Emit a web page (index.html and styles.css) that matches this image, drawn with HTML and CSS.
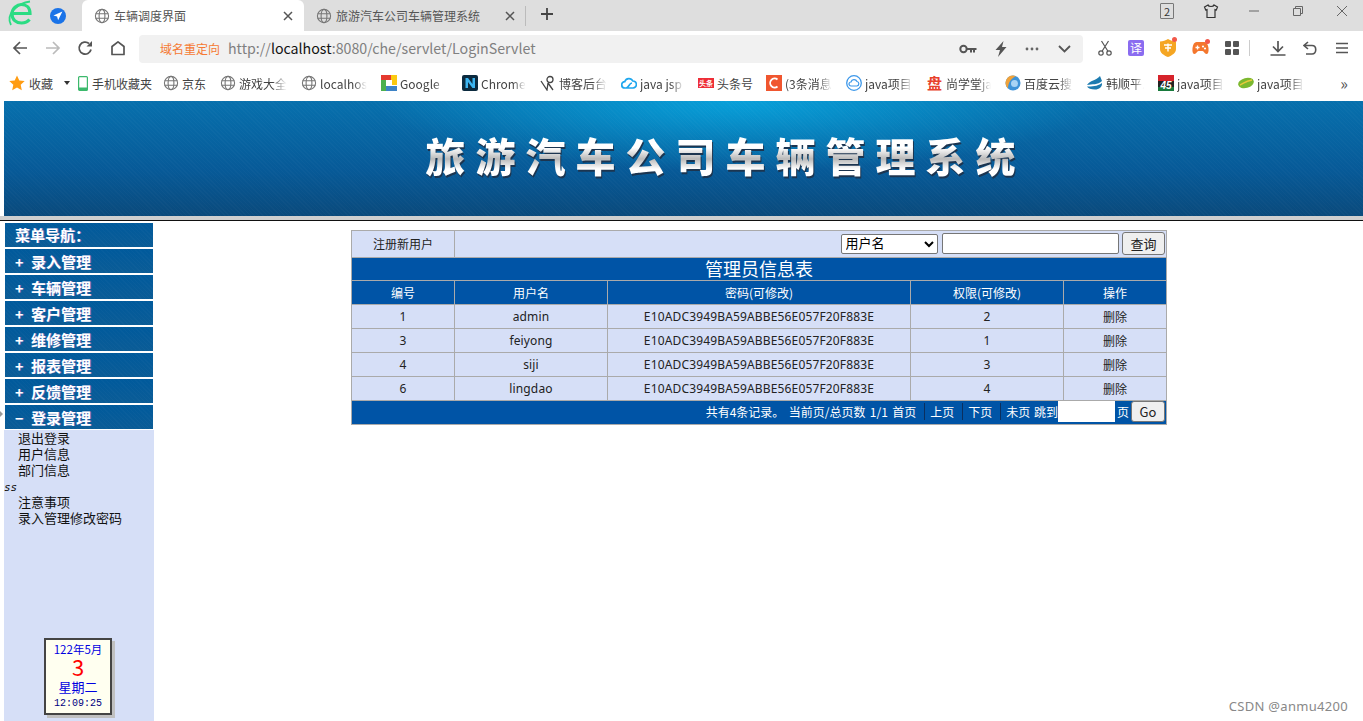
FILE: index.html
```html
<!DOCTYPE html>
<html lang="zh-CN">
<head>
    <meta charset="UTF-8">
    <title>车辆调度界面</title>
    <link rel="stylesheet" href="styles.css">
</head>
<body>

    <svg class="defs" width="0" height="0">
        <symbol id="globe" viewBox="0 0 16 16">
            <g fill="none" stroke="#777" stroke-width="1.1">
                <circle cx="8" cy="8" r="6.6"/>
                <ellipse cx="8" cy="8" rx="2.9" ry="6.6"/>
                <path d="M1.6 5.7h12.8M1.6 10.3h12.8"/>
            </g>
        </symbol>
        <symbol id="close" viewBox="0 0 12 12">
            <path d="M2 2l8 8M10 2l-8 8" fill="none" stroke="#555" stroke-width="1.5"/>
        </symbol>
    </svg>

    <!-- 标签栏 -->
    <div class="tabbar">
        <svg class="logo" width="36" height="28" viewBox="0 0 36 28">
            <g fill="none" stroke="#2bdc83">
                <path d="M13 13.500h17c0-6-4-9-8.500-9S12 8.500 12 14s4 9 9.500 9c3 0 6-1 8-3.500" stroke-width="3.200"/>
                <path d="M11 25C5 14 18 3 30 1.500" stroke-width="1.800"/>
            </g>
        </svg>
        <svg class="compass" width="16" height="16" viewBox="0 0 16 16">
            <circle cx="8" cy="8" r="8" fill="#1a73e8"/>
            <path d="M12.400 3.600L3.400 7.500l3.700.9 1 3.900z" fill="#fff"/>
        </svg>
        <div class="tab active">
            <svg width="16" height="16"><use href="#globe"/></svg>
            <span class="tab-title">车辆调度界面</span>
            <svg class="tab-close" width="12" height="12"><use href="#close"/></svg>
        </div>
        <div class="tab">
            <svg width="16" height="16"><use href="#globe"/></svg>
            <span class="tab-title">旅游汽车公司车辆管理系统</span>
            <svg class="tab-close" width="12" height="12"><use href="#close"/></svg>
        </div>
        <span class="tab-sep"></span>
        <svg class="new-tab" width="14" height="14" viewBox="0 0 14 14">
            <path d="M7 1v12M1 7h12" stroke="#444" stroke-width="1.800"/>
        </svg>
        <div class="win-controls">
            <span class="tab-count">2</span>
            <svg class="win-shirt" width="16" height="16" viewBox="0 0 16 16">
                <path d="M5 2L1.500 4l1.200 3L4 6.500V14.500h8V6.500l1.300.5 1.200-3L11 2c-.5 2-5.500 2-6 0z" fill="none" stroke="#333" stroke-width="1.200"/>
            </svg>
            <svg width="12" height="12" viewBox="0 0 12 12"><path d="M1 6h10" stroke="#666"/></svg>
            <svg width="12" height="12" viewBox="0 0 12 12">
                <path d="M3.500 3V1.500h7v7H9M1.500 3.500h7v7h-7z" fill="none" stroke="#666"/>
            </svg>
            <svg width="12" height="12" viewBox="0 0 12 12"><path d="M1 1l10 10M11 1L1 11" stroke="#666"/></svg>
        </div>
    </div>

    <!-- 地址栏 -->
    <div class="toolbar">
        <div class="nav-btns">
            <svg width="16" height="16" viewBox="0 0 16 16"><path d="M15 8H2M8 2L2 8l6 6" fill="none" stroke="#555" stroke-width="1.700"/></svg>
            <svg width="16" height="16" viewBox="0 0 16 16"><path d="M1 8h13M8 2l6 6-6 6" fill="none" stroke="#bbb" stroke-width="1.700"/></svg>
            <svg width="16" height="16" viewBox="0 0 16 16"><path d="M14 9.500A6 6 0 1 1 12 3.500" fill="none" stroke="#555" stroke-width="1.800"/><path d="M9.500 6.500h5.500V1z" fill="#555"/></svg>
            <svg width="16" height="16" viewBox="0 0 16 16"><path d="M2 14.500V6.500L8 1.800l6 4.700v8z" fill="none" stroke="#555" stroke-width="1.700" stroke-linejoin="round"/></svg>
        </div>
        <div class="address">
            <span class="redirect">域名重定向</span>
            <span class="url">http://<b>localhost</b>:8080/che/servlet/LoginServlet</span>
            <div class="address-icons">
                <svg width="18" height="12" viewBox="0 0 18 12"><circle cx="4.500" cy="6" r="3.200" fill="none" stroke="#555" stroke-width="2"/><path d="M8 5h9.500v2H16v2.500h-2V7h-1v2.500h-2V7H8z" fill="#555"/></svg>
                <svg width="14" height="16" viewBox="0 0 14 16"><path d="M9.500 0L1.500 9H6l-2 7 8.500-10H8z" fill="#555"/></svg>
                <svg width="14" height="4" viewBox="0 0 14 4"><g fill="#666"><circle cx="2" cy="2" r="1.400"/><circle cx="7" cy="2" r="1.400"/><circle cx="12" cy="2" r="1.400"/></g></svg>
                <svg class="chevron" width="13" height="8" viewBox="0 0 13 8"><path d="M1 1l5.500 5.500L12 1" fill="none" stroke="#555" stroke-width="1.800"/></svg>
            </div>
        </div>
        <div class="tool-icons">
            <svg width="14" height="16" viewBox="0 0 14 16"><g fill="none" stroke="#555" stroke-width="1.200"><circle cx="3" cy="13" r="2.200"/><circle cx="11" cy="13" r="2.200"/><path d="M4.200 11L10.500 1M9.800 11L3.500 1"/></g></svg>
            <svg width="16" height="16" viewBox="0 0 16 16"><rect width="16" height="16" rx="2" fill="#8a6cf0"/><text class="yi" x="8" y="12.500" text-anchor="middle">译</text></svg>
            <span class="has-dot">
                <svg width="16" height="18" viewBox="0 0 16 18"><path d="M0 2.500C3 2.500 5.500 1.500 8 0c2.500 1.500 5 2.500 8 2.500V10c0 4-4 6.500-8 8-4-1.500-8-4-8-8z" fill="#f5a623"/><path d="M4 6h8M5 9h6M8 4.500v8" stroke="#fff" stroke-width="1.400"/></svg>
            </span>
            <span class="has-dot">
                <svg width="17" height="14" viewBox="0 0 17 14"><path d="M4.500 1h8c2 0 3.500 2 4 6 .4 4-.5 6-2 6-2 0-2.500-3-4-3h-4c-1.500 0-2 3-4 3C1 13 0 11 .5 7c.5-4 2-6 4-6z" fill="#f4772e"/><path d="M3.500 6.500h4M5.500 4.500v4" stroke="#fff" stroke-width="1.300"/><circle cx="11" cy="5.500" r="1.100" fill="#fff"/><circle cx="13" cy="7.500" r="1.100" fill="#fff"/></svg>
            </span>
            <svg width="14" height="14" viewBox="0 0 14 14"><g fill="#555"><rect width="6" height="6" rx="1"/><rect x="8" width="6" height="6" rx="1"/><rect y="8" width="6" height="6" rx="1"/><rect x="8" y="8" width="6" height="6" rx="1"/></g></svg>
            <span class="tool-sep"></span>
            <svg width="16" height="15" viewBox="0 0 16 15"><path d="M8 0v10M3 5.500L8 10.500l5-5M.5 14h15" fill="none" stroke="#555" stroke-width="1.700"/></svg>
            <svg class="tool-undo" width="14" height="14" viewBox="0 0 14 14"><path d="M5 1L1 4.500 5 8M1 4.500h8c5 0 5 8.500 0 8.500H3" fill="none" stroke="#555" stroke-width="1.600"/></svg>
            <svg class="tool-menu" width="12" height="12" viewBox="0 0 12 12"><path d="M0 1.500h12M0 6h12M0 10.500h12" stroke="#555" stroke-width="1.600"/></svg>
        </div>
    </div>

    <!-- 收藏栏 -->
    <div class="bookmarks">
        <div class="bm first">
            <svg width="16" height="16" viewBox="0 0 16 16"><path d="M8 .5l2.300 5 5.400.6-4 3.700 1.100 5.400L8 12.500l-4.800 2.700 1.100-5.400-4-3.700 5.400-.6z" fill="#ff9c12"/></svg>
            <span class="bm-label">收藏</span>
            <span class="caret"></span>
        </div>
        <div class="bm phone">
            <svg width="10" height="15" viewBox="0 0 10 15"><rect x=".6" y=".6" width="8.800" height="13.800" rx="1" fill="none" stroke="#3cb96c" stroke-width="1.200"/><rect x="1" y="11.500" width="8" height="3" fill="#3cb96c"/></svg>
            <span class="bm-label">手机收藏夹</span>
        </div>
        <div class="bm"><svg width="16" height="16"><use href="#globe"/></svg><span class="bm-label">京东</span></div>
        <div class="bm"><svg width="16" height="16"><use href="#globe"/></svg><span class="bm-label fade w48">游戏大全</span></div>
        <div class="bm"><svg width="16" height="16"><use href="#globe"/></svg><span class="bm-label fade">localhos</span></div>
        <div class="bm">
            <svg width="16" height="16" viewBox="0 0 16 16"><path d="M0 0h10v5H5v5H0z" fill="#e53a2f"/><path d="M10 0h6v10h-5V5h-1z" fill="#fbc910"/><path d="M0 5h5v6h11v5H0z" fill="#4cb04f"/><path d="M5 11h11v5H5z" fill="#3d83c6"/></svg>
            <span class="bm-label fade w48">Google</span>
        </div>
        <div class="bm">
            <svg width="16" height="16" viewBox="0 0 16 16"><rect width="16" height="16" rx="2" fill="#0b2a3f"/><path d="M3.500 13V3h2.500l4.500 6V3H13v10h-2.500L6 7v6z" fill="#3cb4f0"/></svg>
            <span class="bm-label fade w45">Chrome</span>
        </div>
        <div class="bm">
            <svg width="16" height="16" viewBox="0 0 16 16"><g fill="none" stroke="#444" stroke-width="1.300"><circle cx="10" cy="4.500" r="3"/><path d="M1 6l6 9 1-7M8 8l5 7"/></g></svg>
            <span class="bm-label fade w48">博客后台</span>
        </div>
        <div class="bm">
            <svg width="16" height="16" viewBox="0 0 16 16"><path d="M4 13a3.200 3.200 0 0 1-.2-6.400A4.300 4.300 0 0 1 11.800 6 3.500 3.500 0 0 1 12 13zM5 13c3 0 3-5 6-5" fill="none" stroke="#1fa7ee" stroke-width="1.700"/></svg>
            <span class="bm-label fade w44">java jsp</span>
        </div>
        <div class="bm toutiao">
            <svg width="16" height="10" viewBox="0 0 16 10"><rect width="16" height="10" fill="#ee2e37"/><text class="tt" x="8" y="7.800" text-anchor="middle">头条</text></svg>
            <span class="bm-label">头条号</span>
        </div>
        <div class="bm">
            <svg width="16" height="16" viewBox="0 0 16 16"><rect width="16" height="16" fill="#f0562f"/><path d="M11.500 4.500A4.500 4.500 0 1 0 11.500 11.500" fill="none" stroke="#fff" stroke-width="1.800"/></svg>
            <span class="bm-label fade">(3条消息</span>
        </div>
        <div class="bm">
            <svg width="16" height="16" viewBox="0 0 16 16"><circle cx="8" cy="8" r="7.300" fill="none" stroke="#3d98ea" stroke-width="1.300"/><path d="M5 11a2 2 0 0 1 0-4 3.200 3.200 0 0 1 6-.5 2.300 2.300 0 0 1 0 4.500z" fill="none" stroke="#3d98ea" stroke-width="1.200"/></svg>
            <span class="bm-label fade w48">java项目</span>
        </div>
        <div class="bm">
            <span class="pan">盘</span>
            <span class="bm-label fade w45">尚学堂ja</span>
        </div>
        <div class="bm">
            <svg width="16" height="16" viewBox="0 0 16 16"><circle cx="8" cy="8" r="7.500" fill="#3e93d8"/><path d="M8 .500A7.500 7.500 0 0 0 3 13.500C3 8 6 3 11 1.200A7.500 7.500 0 0 0 8 .500z" fill="#f0a23a"/><circle cx="9.500" cy="8.500" r="3.500" fill="#a8d4f5"/></svg>
            <span class="bm-label fade w49">百度云搜</span>
        </div>
        <div class="bm">
            <svg width="16" height="14" viewBox="0 0 16 14"><path d="M0 9C3 4 9 5 13 0l2 5c-4 4-10 3-15 4zM0 10.500c5 0 10 0 15-3.500.5 4-3 6.500-7 6.500-4 0-7-1-8-3z" fill="#1c7bb0"/></svg>
            <span class="bm-label fade w38">韩顺平.</span>
        </div>
        <div class="bm">
            <svg width="16" height="16" viewBox="0 0 16 16"><rect width="16" height="6" fill="#d6232b"/><rect y="6" width="16" height="6" fill="#222"/><rect y="12" width="16" height="4" fill="#187a3c"/><text class="num45" x="8" y="13.500" text-anchor="middle">45</text></svg>
            <span class="bm-label fade">java项目</span>
        </div>
        <div class="bm">
            <svg width="16" height="12" viewBox="0 0 16 12"><ellipse cx="8" cy="6" rx="8" ry="5" fill="#7cb82f" transform="rotate(-15 8 6)"/><path d="M2 8c3-1 5-4 12-5" fill="none" stroke="#e8c93c" stroke-width="1.400"/></svg>
            <span class="bm-label fade">java项目</span>
        </div>
        <span class="more">»</span>
    </div>

    <!-- 页面内容 -->
    <div class="page">
        <div class="banner">
            <h1 class="banner-title">旅游汽车公司车辆管理系统</h1>
        </div>
        <div class="banner-rule"></div>

        <div class="main">
            <div class="sidebar">
                <div class="menu-head">菜单导航：</div>
                <div class="menu-item"><i>+</i>录入管理</div>
                <div class="menu-item"><i>+</i>车辆管理</div>
                <div class="menu-item"><i>+</i>客户管理</div>
                <div class="menu-item"><i>+</i>维修管理</div>
                <div class="menu-item"><i>+</i>报表管理</div>
                <div class="menu-item"><i>+</i>反馈管理</div>
                <div class="menu-item last"><i>−</i>登录管理</div>
                <div class="submenu">
                    <a>退出登录</a>
                    <a>用户信息</a>
                    <a>部门信息</a>
                    <em>ss</em>
                    <a>注意事项</a>
                    <a>录入管理修改密码</a>
                </div>
                <div class="calendar">
                    <div class="cal-month">122年5月</div>
                    <div class="cal-day">3</div>
                    <div class="cal-week">星期二</div>
                    <div class="cal-time">12:09:25</div>
                </div>
            </div>

            <div class="content">
                <table class="info-table">
                    <colgroup>
                        <col class="c-narrow">
                        <col class="c-mid">
                        <col class="c-wide">
                        <col class="c-mid">
                        <col class="c-narrow">
                    </colgroup>
                    <tr class="row-search">
                        <td><a>注册新用户</a></td>
                        <td colspan="4" class="search-cell">
                            <select class="search-select"><option>用户名</option></select>
                            <input class="search-input" type="text">
                            <button class="btn">查询</button>
                        </td>
                    </tr>
                    <tr class="row-title"><td colspan="5">管理员信息表</td></tr>
                    <tr class="row-head">
                        <td>编号</td><td>用户名</td><td>密码(可修改)</td><td>权限(可修改)</td><td>操作</td>
                    </tr>
                    <tr class="row-data">
                        <td>1</td><td>admin</td><td>E10ADC3949BA59ABBE56E057F20F883E</td><td>2</td><td><a>删除</a></td>
                    </tr>
                    <tr class="row-data">
                        <td>3</td><td>feiyong</td><td>E10ADC3949BA59ABBE56E057F20F883E</td><td>1</td><td><a>删除</a></td>
                    </tr>
                    <tr class="row-data">
                        <td>4</td><td>siji</td><td>E10ADC3949BA59ABBE56E057F20F883E</td><td>3</td><td><a>删除</a></td>
                    </tr>
                    <tr class="row-data">
                        <td>6</td><td>lingdao</td><td>E10ADC3949BA59ABBE56E057F20F883E</td><td>4</td><td><a>删除</a></td>
                    </tr>
                    <tr class="row-foot">
                        <td colspan="5">
                            <div class="pager">
                                <span class="pager-info">共有4条记录。 当前页/总页数 1/1 首页</span>
                                <span class="pager-sep">上页</span>
                                <span class="pager-sep">下页</span>
                                <span class="pager-sep pager-jump">未页 跳到</span>
                                <input class="pager-input" type="text">
                                <span>页</span>
                                <button class="btn btn-go">Go</button>
                            </div>
                        </td>
                    </tr>
                </table>
            </div>
        </div>
    </div>

    <div class="watermark">CSDN @anmu4200</div>

</body>
</html>
```

FILE: styles.css
```css
/* 全局 */
:root {
    --cell: #d6dff7;
    --blue: #0054a6;
    --line: #aaaaaa;
}

body {
    margin: 0;
    height: 721px;
    overflow: hidden;
    display: flex;
    flex-direction: column;
    position: relative;
    background: #fff;
    color: #222;
    font-family: "Noto Sans CJK SC", "Noto Sans", sans-serif;
    font-size: 12px;
}

.defs {
    position: absolute;
}

svg {
    flex: none;
    display: block;
}

/* 标签栏 */
.tabbar {
    height: 31px;
    background: #dedede;
    display: flex;
    align-items: center;
    flex: none;
}

.logo {
    margin-top: -3px;
}

.compass {
    margin-left: 14px;
    margin-right: 16px;
}

.tab {
    width: 222px;
    height: 31px;
    box-sizing: border-box;
    padding: 0 10px 0 12px;
    display: flex;
    align-items: center;
    gap: 4px;
    color: #555;
    font-size: 12px;
}

.tab.active {
    background: #fff;
    border-radius: 6px 6px 0 0;
}

.tab-title {
    flex: 1;
    white-space: nowrap;
    overflow: hidden;
}

.tab-sep {
    width: 1px;
    height: 20px;
    margin-left: -1px;
    background: #bbb;
}

.new-tab {
    margin-left: 14px;
    margin-top: -3px;
}

.win-controls {
    margin-left: auto;
    margin-right: 15px;
    margin-top: -10px;
    display: flex;
    align-items: center;
    gap: 32px;
}

.tab-count {
    width: 12px;
    height: 14px;
    margin-right: -3px;
    line-height: 14px;
    border: 1px solid #777;
    border-radius: 1px;
    text-align: center;
    font-size: 11px;
    color: #333;
}

.win-shirt {
    margin-right: -3px;
}

/* 地址栏 */
.toolbar {
    height: 34px;
    flex: none;
    display: flex;
    align-items: center;
    background: #fff;
}

.nav-btns {
    width: 139px;
    box-sizing: border-box;
    padding-left: 12px;
    display: flex;
    gap: 16.500px;
}

.address {
    width: 944px;
    height: 28px;
    margin-top: 1px;
    box-sizing: border-box;
    padding: 0 12px 0 21px;
    background: #f1f1f1;
    border-radius: 4px;
    display: flex;
    align-items: center;
}

.redirect {
    color: #f57a33;
    font-size: 12px;
    width: 68px;
}

.url {
    margin-bottom: 2px;
    color: #808080;
    font-size: 14.200px;
}

.url b {
    color: #111;
    font-weight: normal;
}

.address-icons {
    margin-left: auto;
    display: flex;
    align-items: center;
    gap: 17px;
}

.chevron {
    margin-left: 2px;
}

.tool-icons {
    flex: 1;
    box-sizing: border-box;
    padding-left: 15px;
    display: flex;
    align-items: center;
    gap: 16px;
}

.has-dot {
    position: relative;
    display: block;
}

.has-dot::after {
    content: "";
    position: absolute;
    top: -2px;
    right: -1px;
    width: 5px;
    height: 5px;
    border-radius: 50%;
    background: #f2584a;
}

.tool-sep {
    width: 1px;
    height: 16px;
    margin: 0 4px 0 -6px;
    background: #ccc;
}

.tool-undo {
    margin-left: 1px;
}

.tool-menu {
    margin-left: 3px;
}

.yi {
    font-size: 12px;
    fill: #fff;
}

/* 收藏栏 */
.bookmarks {
    height: 36px;
    flex: none;
    box-sizing: border-box;
    padding-left: 9px;
    display: flex;
    align-items: center;
    gap: 14px;
    background: #fff;
    position: relative;
}

.bm {
    display: flex;
    align-items: center;
    gap: 3px;
    white-space: nowrap;
    color: #444;
    font-size: 12px;
}

.bm.first {
    gap: 4px;
}

.bm.phone {
    gap: 4px;
    margin-left: -6px;
    margin-right: -3px;
}

.bm.toutiao {
    margin-right: -1px;
}

.bm-label.fade {
    display: block;
    width: 47px;
    overflow: hidden;
    -webkit-mask-image: linear-gradient(to right, #000 70%, transparent);
    mask-image: linear-gradient(to right, #000 70%, transparent);
}

.bm-label.w38 {
    width: 38px;
}

.bm-label.w44 {
    width: 44px;
}

.bm-label.w45 {
    width: 45px;
}

.bm-label.w48 {
    width: 48px;
}

.bm-label.w49 {
    width: 49px;
}

.caret {
    width: 0;
    height: 0;
    margin-left: 7px;
    border: 3px solid transparent;
    border-top: 4px solid #333;
    border-bottom: 0;
}

.pan {
    width: 16px;
    color: #e8412b;
    font-size: 15px;
    line-height: 16px;
    font-weight: bold;
}

.tt {
    font-size: 7px;
    font-weight: bold;
    fill: #fff;
}

.num45 {
    font: italic bold 10px "Liberation Sans", sans-serif;
    fill: #fff;
}

.more {
    position: absolute;
    right: 15px;
    top: 6px;
    font-size: 16px;
    color: #555;
}

/* 页面内容 */
.page {
    flex: 1;
    min-height: 0;
    display: flex;
    flex-direction: column;
    padding-left: 4px;
    border-top: 1px solid #fff;
    position: relative;
}

/* 菜单左边的小箭头 */
.page::before {
    content: "";
    position: absolute;
    left: 0;
    top: 309px;
    border: 3px solid transparent;
    border-left: 3px solid #999;
    border-right: 0;
}

.banner {
    height: 115px;
    flex: none;
    box-sizing: border-box;
    display: flex;
    align-items: center;
    justify-content: center;
    background:
        repeating-linear-gradient(45deg, rgba(255, 255, 255, .02) 0 1px, transparent 1px 3px),
        radial-gradient(ellipse 360px 70px at 54% 0, rgba(8, 165, 222, .9), transparent),
        linear-gradient(#0770ad, #075a98 60%, #0a4a7c);
    margin-top: -1px;
    padding-left: 78px;
}

.banner-title {
    margin: 0 0 0 6px;
    padding-bottom: 8px;
    font-size: 40px;
    line-height: 1.200;
    font-weight: 900;
    letter-spacing: 10px;
    white-space: nowrap;
    color: transparent;
    background: linear-gradient(#fff 30%, #b9b9b9 50%, #fff 68%);
    -webkit-background-clip: text;
    background-clip: text;
    filter: drop-shadow(1px 2px 0 #1c3550);
}

.banner-rule {
    height: 4px;
    flex: none;
    margin-bottom: 1px;
    background: #cfcfcf;
    border-bottom: 1px solid #111;
    margin-left: -4px;
}

.main {
    flex: 1;
    min-height: 0;
    display: flex;
}

/* 左侧菜单 */
.sidebar {
    width: 150px;
    flex: none;
    box-sizing: border-box;
    padding-top: 1px;
    display: flex;
    flex-direction: column;
}

.menu-head,
.menu-item {
    height: 24px;
    line-height: 25px;
    margin: 0 1px 2px;
    padding-left: 10px;
    color: #fff;
    font-size: 15px;
    font-weight: bold;
    white-space: nowrap;
    text-shadow: 1px 0 0 rgba(190, 120, 220, .5);
    background:
        repeating-linear-gradient(45deg, rgba(255, 255, 255, .02) 0 1px, transparent 1px 3px),
        linear-gradient(#005a9c, #0b5c96);
}

.menu-head {
    line-height: 23px;
}

.menu-item i {
    display: inline-block;
    width: 16px;
    font-style: normal;
    font-size: 14px;
}

.menu-item.last {
    margin-bottom: 1px;
}

.submenu {
    background: var(--cell);
    flex: 1;
    display: flex;
    flex-direction: column;
    font-size: 13px;
    line-height: 16px;
    color: #111;
}

.submenu a {
    padding-left: 14px;
}

.submenu em {
    height: 16px;
    box-sizing: border-box;
    padding-top: 2px;
    font-family: "DejaVu Sans Mono", monospace;
    font-size: 11px;
}

.calendar {
    position: relative;
    background: #fffff0;
    width: 64px;
    height: 73px;
    border: 2px solid #444;
    margin: -84px 0 6px 40px;
    box-shadow: 3px 3px 0 #c0c0c0;
    text-align: center;
    color: #0000e0;
}

.cal-month {
    font-size: 11.500px;
    line-height: 16px;
    margin-top: 1px;
}

.cal-day {
    color: #f00;
    font-size: 22px;
    line-height: 20px;
    margin-top: -1px;
}

.cal-week {
    font-size: 13px;
    line-height: 18px;
    margin-top: 2px;
}

.cal-time {
    font-family: "Liberation Mono", monospace;
    font-size: 10px;
    line-height: 15px;
    color: #000080;
}

/* 信息表 */
.content {
    flex: 1;
    box-sizing: border-box;
    padding: 8px 0 0 1px;
    display: flex;
    justify-content: center;
    align-items: flex-start;
}

.info-table {
    width: 816px;
    table-layout: fixed;
    border-collapse: collapse;
    font-size: 12px;
    text-align: center;
}

.info-table td {
    border: 1px solid var(--line);
    padding: 0;
}

.c-narrow {
    width: 103px;
}

.c-mid {
    width: 153px;
}

.c-wide {
    width: 303px;
}

.row-search {
    height: 27px;
    background: var(--cell);
}

.info-table .row-search td {
    padding-bottom: 1px;
}

.info-table .search-cell {
    text-align: right;
    white-space: nowrap;
    padding-right: 1px;
}

.search-select {
    width: 97px;
    height: 20px;
    margin-right: 2px;
    font: 13px "Liberation Sans", "Noto Sans CJK SC", sans-serif;
    background: #fff;
    border: 1px solid #767676;
    border-radius: 2px;
    vertical-align: middle;
}

.search-input {
    width: 177px;
    height: 21px;
    box-sizing: border-box;
    border: 1px solid #767676;
    border-radius: 2px;
    vertical-align: middle;
}

.btn {
    width: 43px;
    height: 23px;
    padding: 0;
    font: 13px "Noto Sans CJK SC", sans-serif;
    color: #222;
    background: #efefef;
    border: 1px solid #767676;
    border-radius: 3px;
    vertical-align: middle;
}

.row-title {
    height: 23px;
    background: var(--blue);
    color: #fff;
    font-size: 18px;
}

.info-table .row-title td {
    padding-bottom: 1px;
    line-height: 21px;
}

.row-head {
    height: 24px;
    background: var(--blue);
    color: #fff;
}

.row-data {
    height: 24px;
    background: var(--cell);
}

.row-data td:nth-child(-n+4) {
    font-family: "Noto Sans", sans-serif;
    letter-spacing: .15px;
}

.row-foot {
    height: 24px;
    background: var(--blue);
    color: #fff;
}

.info-table .row-foot td {
    padding-bottom: 2px;
}

.pager {
    height: 21px;
    display: flex;
    align-items: center;
    justify-content: flex-end;
    padding-right: 1px;
    white-space: nowrap;
}

.pager-info {
    word-spacing: 1.700px;
}

.pager-sep {
    border-left: 1px solid #0b2f5e;
    margin-left: 8px;
    padding-left: 5px;
}

.pager-jump {
    word-spacing: 1px;
}

.pager-input {
    width: 57px;
    height: 21px;
    box-sizing: border-box;
    margin-right: 2px;
    border: none;
    background: #fff;
}

.btn-go {
    width: 34px;
    height: 21px;
    margin-left: 2px;
}

/* 水印 */
.watermark {
    position: absolute;
    right: 15px;
    bottom: 6px;
    color: #888;
    font: 13px "Noto Sans", sans-serif;
    letter-spacing: .3px;
}
```
